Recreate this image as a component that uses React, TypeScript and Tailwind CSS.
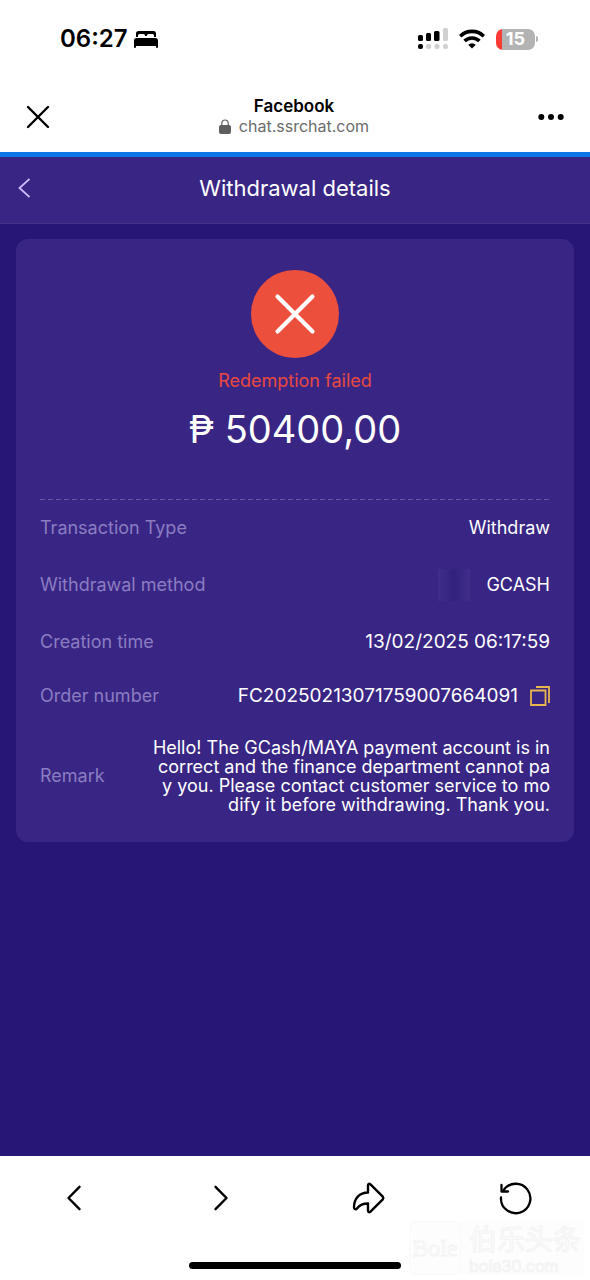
import type { ReactNode } from "react";

const BedIcon = () => (
  <svg className="w-[26px] h-5" viewBox="0 0 26 20" fill="currentColor">
    <path d="M3 8V4.500a2.500 2.500 0 0 1 2.500-2.500h15A2.500 2.500 0 0 1 23 4.500V8h-2V6.500a1.500 1.500 0 0 0-1.500-1.500h-4A1.500 1.500 0 0 0 14 6.500V7h-2v-.5A1.500 1.500 0 0 0 10.500 5h-4A1.500 1.500 0 0 0 5 6.500V8Z" />
    <path d="M3.500 9h19A2.500 2.500 0 0 1 25 11.500V18a1 1 0 0 1-2 0v-1H3v1a1 1 0 0 1-2 0v-6.500A2.500 2.500 0 0 1 3.500 9Z" />
  </svg>
);

const SignalIcon = () => (
  <svg className="w-[30px] h-[22px]" viewBox="0 0 30 22">
    <g fill="#000">
      <rect x="0" y="7" width="5" height="6" rx="1.500" />
      <rect x="8" y="5" width="5" height="8" rx="1.500" />
      <rect x="16" y="3" width="5.500" height="10" rx="1.500" />
      <rect x="0" y="16" width="5" height="5" rx="2" />
    </g>
    <g fill="#d0d0d0">
      <rect x="25" y="0" width="5" height="13" rx="1.500" />
      <rect x="8" y="16" width="5" height="5" rx="2" />
      <rect x="16.500" y="16" width="5" height="5" rx="2" />
      <rect x="25" y="16" width="5" height="5" rx="2" />
    </g>
  </svg>
);

const WifiIcon = () => (
  <svg className="w-[26px] h-5" viewBox="0 0 26 20" fill="none" stroke="#000" strokeWidth="3.600">
    <path d="M1.200 7.300a16.700 16.700 0 0 1 23.600 0" />
    <path d="M5.600 12a10.500 10.500 0 0 1 14.800 0" />
    <path d="M13 19.500l-3.800-3.700a5.400 5.400 0 0 1 7.600 0Z" fill="#000" stroke="none" />
  </svg>
);

const Battery = () => (
  <div className="flex items-center gap-px">
    <div className="flex h-[21px] w-[39px] items-center justify-center rounded-[7px] bg-linear-to-r from-[#fb3b36] from-16% to-[#b3b3b3] to-16% text-lg leading-none font-bold text-white">
      15
    </div>
    <div className="h-[6px] w-[2px] rounded-r bg-[#b3b3b3]" />
  </div>
);

const CloseIcon = ({ className = "w-6 h-6" }) => (
  <svg className={className} viewBox="0 0 24 24" fill="none" stroke="currentColor" strokeWidth="2.400" strokeLinecap="round">
    <path d="M2 2l20 20M22 2L2 22" />
  </svg>
);

const LockIcon = () => (
  <svg className="w-3 h-[15px]" viewBox="0 0 12 15">
    <rect x="0" y="6" width="12" height="9" rx="2" fill="#5f5f5f" />
    <path d="M2.800 7V4.200a3.200 3.200 0 0 1 6.400 0V7" fill="none" stroke="#5f5f5f" strokeWidth="1.200" />
  </svg>
);

const DotsIcon = () => (
  <svg className="w-[26px] h-2" viewBox="0 0 26 8" fill="currentColor">
    <circle cx="3.300" cy="4" r="3" />
    <circle cx="13" cy="4" r="3" />
    <circle cx="22.700" cy="4" r="3" />
  </svg>
);

const BackIcon = () => (
  <svg className="w-3 h-5" viewBox="0 0 12 20" fill="none" stroke="#cdb9fa" strokeWidth="1.800">
    <path d="M11.500 1L1.500 10l10 9" />
  </svg>
);

const CopyIcon = () => (
  <svg className="w-5 h-5" viewBox="0 0 20 20" fill="none" stroke="#e8b64a" strokeWidth="1.800">
    <path d="M1 4.500h14.500V19H1Z" />
    <path d="M6 1h13v16" />
  </svg>
);

const ChevronIcon = ({ flip = false }) => (
  <svg
    className={flip ? "w-4 h-[26px] -scale-x-100" : "w-4 h-[26px]"}
    viewBox="0 0 16 26"
    fill="none"
    stroke="currentColor"
    strokeWidth="2.400"
    strokeLinecap="round"
    strokeLinejoin="round"
  >
    <path d="M13.500 1.800L2.500 13l11 11.200" />
  </svg>
);

const ShareIcon = () => (
  <svg className="w-8 h-8 overflow-visible" viewBox="0 0 32 32" fill="none" stroke="currentColor" strokeWidth="2.400" strokeLinejoin="round">
    <path d="M15 3.400c0-1.800 1.300-2.200 2.500-1l12.300 12.300c.7.800.7 1.800 0 2.600L17.500 29.600c-1.200 1.200-2.500.8-2.500-1v-7.100c-4.500 0-8.200 1.300-11 4.900-1 1.300-3 .9-3-.9C1 16.500 6.500 10.500 15 10.500Z" />
  </svg>
);

const ReloadIcon = () => (
  <svg className="w-8 h-8 overflow-visible" viewBox="0 0 32 32" fill="none" stroke="currentColor" strokeWidth="2.300" strokeLinecap="round" strokeLinejoin="round">
    <path d="M1 15.500a14.700 14.700 0 1 0 2.300-7" />
    <path d="M1.500 3v6.500H8" />
  </svg>
);

type RowProps = { label: string; className: string; children: ReactNode };

const Row = ({ label, className, children }: RowProps) => (
  <div className={`flex items-center justify-between ${className}`}>
    <dt className="text-[#8b7cc2]">{label}</dt>
    <dd className="flex items-center text-right text-white">{children}</dd>
  </div>
);

const StatusBar = () => (
  <div className="flex h-[82px] items-center justify-between pr-[52px] pb-1 pl-[60px]">
    <div className="flex items-center gap-[5px]">
      <span className="text-2xl font-semibold">06:27</span>
      <BedIcon />
    </div>
    <div className="flex items-center gap-[11px]">
      <SignalIcon />
      <WifiIcon />
      <Battery />
    </div>
  </div>
);

const Watermark = () => (
  <div className="absolute right-[5px] bottom-[5px] flex h-[54px] w-[176px] items-center gap-2 bg-[#fdfdfd] text-[#fdfdfd]">
    <span className="flex h-full w-[52px] items-center justify-center rounded-lg border border-[#f9f9f9] font-['Liberation_Serif',serif] text-2xl [-webkit-text-stroke:1px_#f4f4f4]">
      Bole
    </span>
    <span className="flex flex-col gap-1 [-webkit-text-stroke:1px_#f3f3f3]">
      <span className="font-['Noto_Sans_CJK_SC',sans-serif] text-[28px] leading-8">伯乐头条</span>
      <span className="text-base leading-4">bole30.com</span>
    </span>
  </div>
);

export default function App() {
  return (
    <div className="flex min-h-screen flex-col bg-white font-[Inter,sans-serif] text-black">
      <StatusBar />
      <header className="flex h-[70px] items-center justify-between px-[26px]">
        <button aria-label="Close">
          <CloseIcon className="w-6 h-6" />
        </button>
        <div className="flex flex-col items-center pb-0.5">
          <span className="text-[17px] leading-5 font-semibold">Facebook</span>
          <span className="flex items-center gap-2 text-base leading-5 text-[#6b6b6b]">
            <LockIcon />
            chat.ssrchat.com
          </span>
        </div>
        <button aria-label="More options">
          <DotsIcon />
        </button>
      </header>
      <div className="h-[5px] bg-[#0f78e8]" />

      <main className="flex-1 bg-[#271676]">
        <div className="grid h-[67px] grid-cols-[1fr_auto_1fr] items-center border-b border-[#443389] bg-[#392684] px-[18px] pb-1">
          <button aria-label="Back" className="justify-self-start">
            <BackIcon />
          </button>
          <h1 className="text-[22px] text-white">Withdrawal details</h1>
        </div>

        <section className="mx-4 mt-[15px] rounded-xl bg-[#392684] px-6 pt-[31px] pb-7 text-lg">
          <div className="flex flex-col items-center">
            <div className="flex h-[88px] w-[88px] items-center justify-center rounded-full bg-[#ec503d] text-white">
              <CloseIcon className="w-[42px] h-[42px]" />
            </div>
            <p className="mt-[9px] text-[#e8483f]">Redemption failed</p>
            <p className="mt-[10px] text-[38px] leading-[48px] text-white">₱ 50400,00</p>
          </div>

          <div className="mt-[46px] h-px bg-[repeating-linear-gradient(90deg,#6655a3_0_5px,transparent_5px_8px)]" />

          <dl>
            <Row label="Transaction Type" className="h-14">
              Withdraw
            </Row>
            <Row label="Withdrawal method" className="h-[58px]">
              <span className="mr-4 h-8 w-8 bg-linear-to-r from-[#412e8b] via-[#33217e] to-[#412e8b]" />
              GCASH
            </Row>
            <Row label="Creation time" className="h-14">
              <span className="text-[19px]">13/02/2025 06:17:59</span>
            </Row>
            <Row label="Order number" className="h-[52px]">
              <span className="text-[19px]">FC20250213071759007664091</span>
              <button aria-label="Copy order number" className="ml-3">
                <CopyIcon />
              </button>
            </Row>
            <Row label="Remark" className="pt-4">
              <p className="leading-[19px] whitespace-nowrap">
                Hello! The GCash/MAYA payment account is in
                <br />
                correct and the finance department cannot pa
                <br />
                y you. Please contact customer service to mo
                <br />
                dify it before withdrawing. Thank you.
              </p>
            </Row>
          </dl>
        </section>
      </main>

      <footer className="relative flex h-[124px] flex-col items-center justify-between pb-[11px]">
        <nav className="grid h-[84px] w-full grid-cols-4">
          <button aria-label="Previous page" className="flex items-center justify-center">
            <ChevronIcon />
          </button>
          <button aria-label="Next page" className="flex items-center justify-center">
            <ChevronIcon flip />
          </button>
          <button aria-label="Share" className="flex items-center justify-center">
            <ShareIcon />
          </button>
          <button aria-label="Reload" className="flex items-center justify-center">
            <ReloadIcon />
          </button>
        </nav>
        <Watermark />
        <div className="h-[7px] w-[212px] rounded-full bg-black" />
      </footer>
    </div>
  );
}
